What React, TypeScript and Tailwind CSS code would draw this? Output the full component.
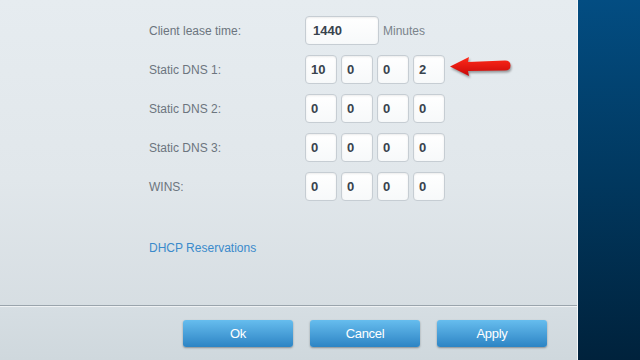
import React from 'react';

const font = { fontFamily: '"Liberation Sans", Arial, sans-serif' };

function Field({ value, wide }: { value: string; wide?: boolean }) {
  return (
    <div
      className={`${wide ? 'w-[74px] pl-[7px]' : 'w-[32px] pl-[5px]'} h-[29px] flex items-center rounded-[4px] border border-[#c6cdd3] bg-gradient-to-b from-white to-[#f7f9fa] shadow-[inset_0_1px_2px_rgba(0,0,0,0.08)] text-[13px] font-bold text-[#38434d]`}
    >
      {value}
    </div>
  );
}

function Row({ label, children }: { label: string; children: React.ReactNode }) {
  return (
    <div className="flex h-[29px] items-center">
      <div className="w-[156px] text-[12px] text-[#6c757e]">{label}</div>
      <div className="flex items-center gap-[4px]">{children}</div>
    </div>
  );
}

function Ip({ parts }: { parts: string[] }) {
  return (
    <>
      {parts.map((p, i) => (
        <Field key={i} value={p} />
      ))}
    </>
  );
}

function Btn({ label }: { label: string }) {
  return (
    <button
      className="w-[110px] h-[27px] rounded-[3px] bg-gradient-to-b from-[#66bdee] to-[#2c84c4] text-white text-[13px] tracking-[-0.3px] shadow-[0_1px_2px_rgba(0,0,0,0.35)]"
      style={{ fontFamily: '"Liberation Sans Narrow", "Liberation Sans", Arial, sans-serif' }}
    >
      {label}
    </button>
  );
}

export default function App() {
  return (
    <div className="flex w-[640px] h-[360px] overflow-hidden" style={font}>
      {/* 主面板 */}
      <div className="relative flex flex-col w-[577px] bg-gradient-to-b from-[#e6ecf0] via-[#e1e7eb] to-[#d2dadf]">
        <div className="flex-1 pl-[149px] pt-[16px]">
          <div className="flex flex-col gap-[10px]">
            <Row label="Client lease time:">
              <Field value="1440" wide />
              <span className="text-[12px] text-[#7a838b]">Minutes</span>
            </Row>
            <Row label="Static DNS 1:">
              <Ip parts={['10', '0', '0', '2']} />
            </Row>
            <Row label="Static DNS 2:">
              <Ip parts={['0', '0', '0', '0']} />
            </Row>
            <Row label="Static DNS 3:">
              <Ip parts={['0', '0', '0', '0']} />
            </Row>
            <Row label="WINS:">
              <Ip parts={['0', '0', '0', '0']} />
            </Row>
          </div>
          <div className="mt-[40px] text-[12px] leading-[14px] text-[#3a8acb]">DHCP Reservations</div>
        </div>

        {/* 分隔线 + 按钮 */}
        <div className="h-[55px] border-t border-[#9aa4ac] shadow-[inset_0_1px_0_rgba(255,255,255,0.6)] bg-gradient-to-b from-[#d6dee3] to-[#cfd8dd] flex justify-end items-start gap-[17px] pr-[30px] pt-[14px]">
          <Btn label="Ok" />
          <Btn label="Cancel" />
          <Btn label="Apply" />
        </div>

        {/* 红色箭头标注 */}
        <svg
          className="absolute left-[448px] top-[54px] drop-shadow-[1px_2px_1px_rgba(0,0,0,0.35)]"
          width="66"
          height="26"
          viewBox="0 0 66 26"
        >
          <defs>
            <linearGradient id="ar" x1="0" y1="0" x2="0" y2="1">
              <stop offset="0" stopColor="#ff2a1a" />
              <stop offset="1" stopColor="#c80808" />
            </linearGradient>
          </defs>
          <path
            d="M2 12.5 L21 3 L20 8 L57 6.5 Q62.5 6.5 62.5 11.5 Q62.5 16.5 57 16.5 L20 17 L21 22 Z"
            fill="url(#ar)"
          />
        </svg>
      </div>

      {/* 右侧深色面板 */}
      <div className="w-[1px] bg-[#f4f7f9]" />
      <div className="flex-1 bg-gradient-to-b from-[#034d82] via-[#01385f] to-[#00223c]" />
    </div>
  );
}
